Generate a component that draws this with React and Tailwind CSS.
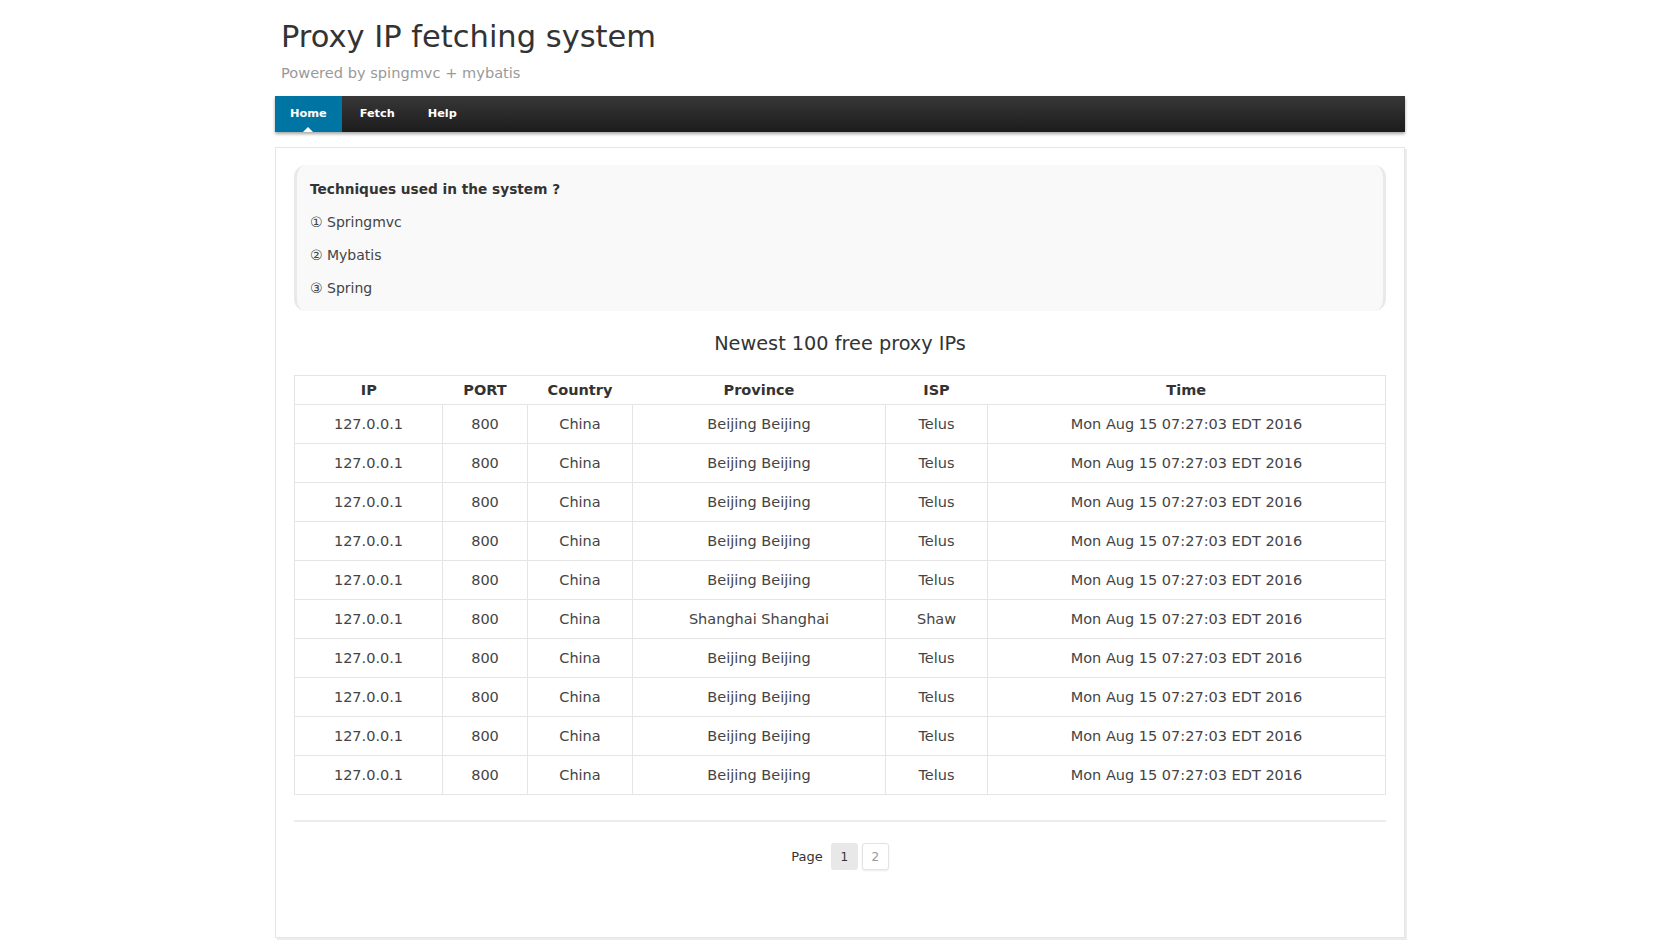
import React from "react";

const rows = [
  { ip: "127.0.0.1", port: 800, country: "China", province: "Beijing Beijing", isp: "Telus" },
  { ip: "127.0.0.1", port: 800, country: "China", province: "Beijing Beijing", isp: "Telus" },
  { ip: "127.0.0.1", port: 800, country: "China", province: "Beijing Beijing", isp: "Telus" },
  { ip: "127.0.0.1", port: 800, country: "China", province: "Beijing Beijing", isp: "Telus" },
  { ip: "127.0.0.1", port: 800, country: "China", province: "Beijing Beijing", isp: "Telus" },
  { ip: "127.0.0.1", port: 800, country: "China", province: "Shanghai Shanghai", isp: "Shaw" },
  { ip: "127.0.0.1", port: 800, country: "China", province: "Beijing Beijing", isp: "Telus" },
  { ip: "127.0.0.1", port: 800, country: "China", province: "Beijing Beijing", isp: "Telus" },
  { ip: "127.0.0.1", port: 800, country: "China", province: "Beijing Beijing", isp: "Telus" },
  { ip: "127.0.0.1", port: 800, country: "China", province: "Beijing Beijing", isp: "Telus" },
];

const TIME = "Mon Aug 15 07:27:03 EDT 2016";

export default function App() {
  return (
    <div className="min-h-screen bg-white text-[#333] font-['DejaVu_Sans',Verdana,sans-serif]">
      <div className="w-[1130px] mx-auto pb-[11px]">
        {/* Header */}
        <div className="pt-[19px] pl-[6px]">
          <h1 className="text-[30.5px] leading-[36px] text-[#333]">Proxy IP fetching system</h1>
          <p className="mt-[8px] text-[14.6px] leading-[20px] text-[#999]">Powered by spingmvc + mybatis</p>
        </div>

        {/* Navbar */}
        <nav className="mt-[13px] h-[36px] flex bg-gradient-to-b from-[#383838] to-[#1c1c1c] shadow-[0_2px_3px_rgba(0,0,0,0.35)]">
          <a className="relative flex items-center px-[15px] bg-[#0074a2] text-white text-[11.3px] font-bold">
            Home
            <span className="absolute bottom-0 left-1/2 -translate-x-1/2 w-0 h-0 border-x-[5px] border-x-transparent border-b-[5px] border-b-white" />
          </a>
          <a className="flex items-center px-[18px] text-white text-[11.3px] font-bold">Fetch</a>
          <a className="flex items-center px-[15px] text-white text-[11.3px] font-bold">Help</a>
        </nav>

        {/* Panel */}
        <div className="mt-[15px] border border-[#e6e6e6] shadow-[2px_2px_0_#ececec] px-[18px] pt-[17px] pb-[67px]">
          <div className="rounded-[12px] bg-[#f9f9f9] border-x-[3px] border-[#e9e9e9] px-[13px] pt-[14px] pb-[13px]">
            <p className="text-[13.7px] leading-[20px] font-bold text-[#333]">Techniques used in the system ?</p>
            <p className="mt-[13px] text-[14px] leading-[20px] text-[#444]">① Springmvc</p>
            <p className="mt-[13px] text-[14px] leading-[20px] text-[#444]">② Mybatis</p>
            <p className="mt-[13px] text-[14px] leading-[20px] text-[#444]">③ Spring</p>
          </div>

          <h2 className="mt-[19px] text-center text-[19.3px] leading-[28px] text-[#333]">Newest 100 free proxy IPs</h2>

          <table className="mt-[17px] w-full table-fixed border-collapse border border-[#e5e5e5] text-[14.5px]">
            <colgroup>
              <col className="w-[148px]" />
              <col className="w-[85px]" />
              <col className="w-[105px]" />
              <col className="w-[253px]" />
              <col className="w-[102px]" />
              <col />
            </colgroup>
            <thead>
              <tr className="h-[29px] border-b border-[#e5e5e5]">
                <th className="pt-[2px] font-bold text-[#333]">IP</th>
                <th className="pt-[2px] font-bold text-[#333]">PORT</th>
                <th className="pt-[2px] font-bold text-[#333]">Country</th>
                <th className="pt-[2px] font-bold text-[#333]">Province</th>
                <th className="pt-[2px] font-bold text-[#333]">ISP</th>
                <th className="pt-[2px] font-bold text-[#333]">Time</th>
              </tr>
            </thead>
            <tbody>
              {rows.map((r, i) => (
                <tr key={i} className="h-[39px] text-center text-[#444]">
                  <td className="pt-[2px] border border-[#e5e5e5]">{r.ip}</td>
                  <td className="pt-[2px] border border-[#e5e5e5]">{r.port}</td>
                  <td className="pt-[2px] border border-[#e5e5e5]">{r.country}</td>
                  <td className="pt-[2px] border border-[#e5e5e5]">{r.province}</td>
                  <td className="pt-[2px] border border-[#e5e5e5]">{r.isp}</td>
                  <td className="pt-[2px] border border-[#e5e5e5]">{TIME}</td>
                </tr>
              ))}
            </tbody>
          </table>

          <hr className="mt-[25px] border-0 border-t-2 border-[#ececec]" />

          {/* Pagination */}
          <div className="mt-[21px] flex items-center justify-center gap-[4px] text-[13px]">
            <span className="mr-[4px] text-[#333]">Page</span>
            <span className="w-[27px] h-[27px] flex items-center justify-center rounded-[3px] bg-[#e8e8e8] text-[12px] text-[#333]">1</span>
            <span className="w-[27px] h-[27px] flex items-center justify-center rounded-[3px] border border-[#e3e3e3] bg-white text-[12px] text-[#999] shadow-[0_1px_2px_rgba(0,0,0,0.08)]">2</span>
          </div>
        </div>
      </div>
    </div>
  );
}
